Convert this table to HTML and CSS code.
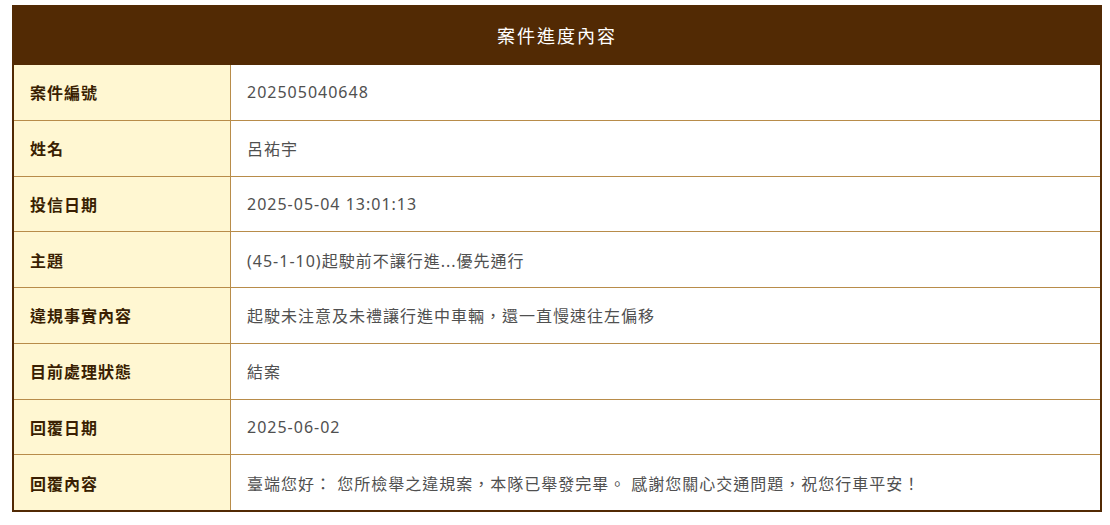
FILE: index.html
```html
<!DOCTYPE html>
<html lang="zh-Hant">
<head>
<meta charset="utf-8">
<link rel="stylesheet" href="styles.css">
</head>
<body>
<div class="card">
  <div class="card-head">案件進度內容</div>
  <div class="rows">
    <div class="row"><div class="label">案件編號</div><div class="value">202505040648</div></div>
    <div class="row"><div class="label">姓名</div><div class="value">呂祐宇</div></div>
    <div class="row"><div class="label">投信日期</div><div class="value">2025-05-04 13:01:13</div></div>
    <div class="row"><div class="label">主題</div><div class="value">(45-1-10)起駛前不讓行進...優先通行</div></div>
    <div class="row"><div class="label">違規事實內容</div><div class="value">起駛未注意及未禮讓行進中車輛，還一直慢速往左偏移</div></div>
    <div class="row"><div class="label">目前處理狀態</div><div class="value">結案</div></div>
    <div class="row"><div class="label">回覆日期</div><div class="value">2025-06-02</div></div>
    <div class="row"><div class="label">回覆內容</div><div class="value">臺端您好： 您所檢舉之違規案，本隊已舉發完畢。 感謝您關心交通問題，祝您行車平安！</div></div>
  </div>
</div>
</body>
</html>
```

FILE: styles.css
```css
html, body {
  margin: 0;
  padding: 0;
  background: #ffffff;
}
body {
  font-family: "Noto Sans", "Noto Sans CJK TC", sans-serif;
}
.card {
  margin: 5px 8px 0 12px;
  width: 1090px;
}
.card-head {
  height: 60px;
  background: #522a04;
  color: #ffffff;
  font-size: 18px;
  letter-spacing: 2px;
  display: flex;
  align-items: center;
  justify-content: center;
}
.rows {
  border: 2px solid #522a04;
  border-top: none;
}
.row {
  display: grid;
  grid-template-columns: 217px 1fr;
  height: 55.75px;
  box-sizing: border-box;
  border-bottom: 1px solid #b88c4a;
}
.row:last-child {
  border-bottom: none;
  height: 54.75px;
}
.label {
  background: #fff7d2;
  border-right: 1px solid #b88c4a;
  color: #3a1f02;
  font-weight: 700;
  font-size: 16px;
  letter-spacing: 1px;
  padding-left: 16px;
  display: flex;
  align-items: center;
}
.value {
  color: #505050;
  font-size: 16px;
  letter-spacing: 1px;
  padding-left: 16px;
  display: flex;
  align-items: center;
}
```
